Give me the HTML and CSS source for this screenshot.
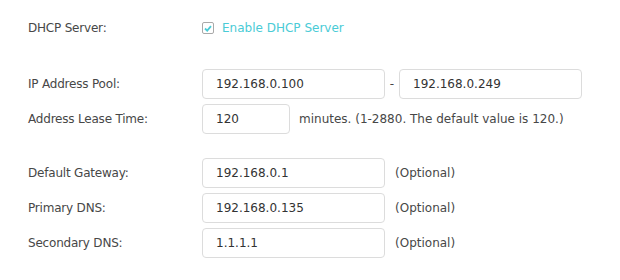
FILE: index.html
```html
<!DOCTYPE html>
<html>
<head>
<meta charset="utf-8">
<link rel="stylesheet" href="styles.css">
</head>
<body>
<div class="form">
  <div class="section">
    <div class="row">
      <div class="label">DHCP Server:</div>
      <label class="check">
        <span class="box"><svg width="8" height="7" viewBox="0 0 8 7"><path d="M1 3.5 L3.2 5.6 L7 1.2" fill="none" stroke="#4acbd6" stroke-width="1.8"/></svg></span>
        <span class="check-text">Enable DHCP Server</span>
      </label>
    </div>
  </div>
  <div class="section s2">
    <div class="row">
      <div class="label">IP Address Pool:</div>
      <div class="field"><div class="input">192.168.0.100</div><span class="dash">-</span><div class="input">192.168.0.249</div></div>
    </div>
    <div class="row">
      <div class="label">Address Lease Time:</div>
      <div class="field"><div class="input short">120</div><span class="hint">minutes. (1-2880. The default value is 120.)</span></div>
    </div>
  </div>
  <div class="section s3">
    <div class="row">
      <div class="label">Default Gateway:</div>
      <div class="field"><div class="input">192.168.0.1</div><span class="hint opt">(Optional)</span></div>
    </div>
    <div class="row">
      <div class="label">Primary DNS:</div>
      <div class="field"><div class="input">192.168.0.135</div><span class="hint opt">(Optional)</span></div>
    </div>
    <div class="row">
      <div class="label">Secondary DNS:</div>
      <div class="field"><div class="input">1.1.1.1</div><span class="hint opt">(Optional)</span></div>
    </div>
  </div>
</div>
</body>
</html>
```
FILE: styles.css
```css
html, body {
  margin: 0;
  padding: 0;
  background: #ffffff;
}
body {
  font-family: "DejaVu Sans", Verdana, sans-serif;
  font-size: 12px;
  color: #474747;
}
.form {
  padding: 13px 0 0 28px;
}
.section {
  display: flex;
  flex-direction: column;
  gap: 5px;
}
.s2 { margin-top: 26px; }
.s3 { margin-top: 24px; }
.row {
  display: flex;
  align-items: center;
  height: 30px;
}
.label {
  width: 174px;
  flex: none;
  letter-spacing: -0.2px;
}
.check {
  display: flex;
  align-items: center;
  gap: 8px;
}
.box {
  width: 10px;
  height: 10px;
  border: 1px solid #a9a9a9;
  border-radius: 2px;
  display: flex;
  align-items: center;
  justify-content: center;
}
.check-text {
  color: #4acbd6;
}
.field {
  display: flex;
  align-items: center;
}
.input {
  box-sizing: border-box;
  width: 183px;
  height: 30px;
  border: 1px solid #dcdcdc;
  border-radius: 4px;
  padding-left: 13px;
  display: flex;
  align-items: center;
  color: #333333;
}
.input.short {
  width: 88px;
}
.dash {
  width: 14px;
  text-align: center;
}
.hint {
  margin-left: 9px;
}
.hint.opt {
  margin-left: 10px;
}
```
